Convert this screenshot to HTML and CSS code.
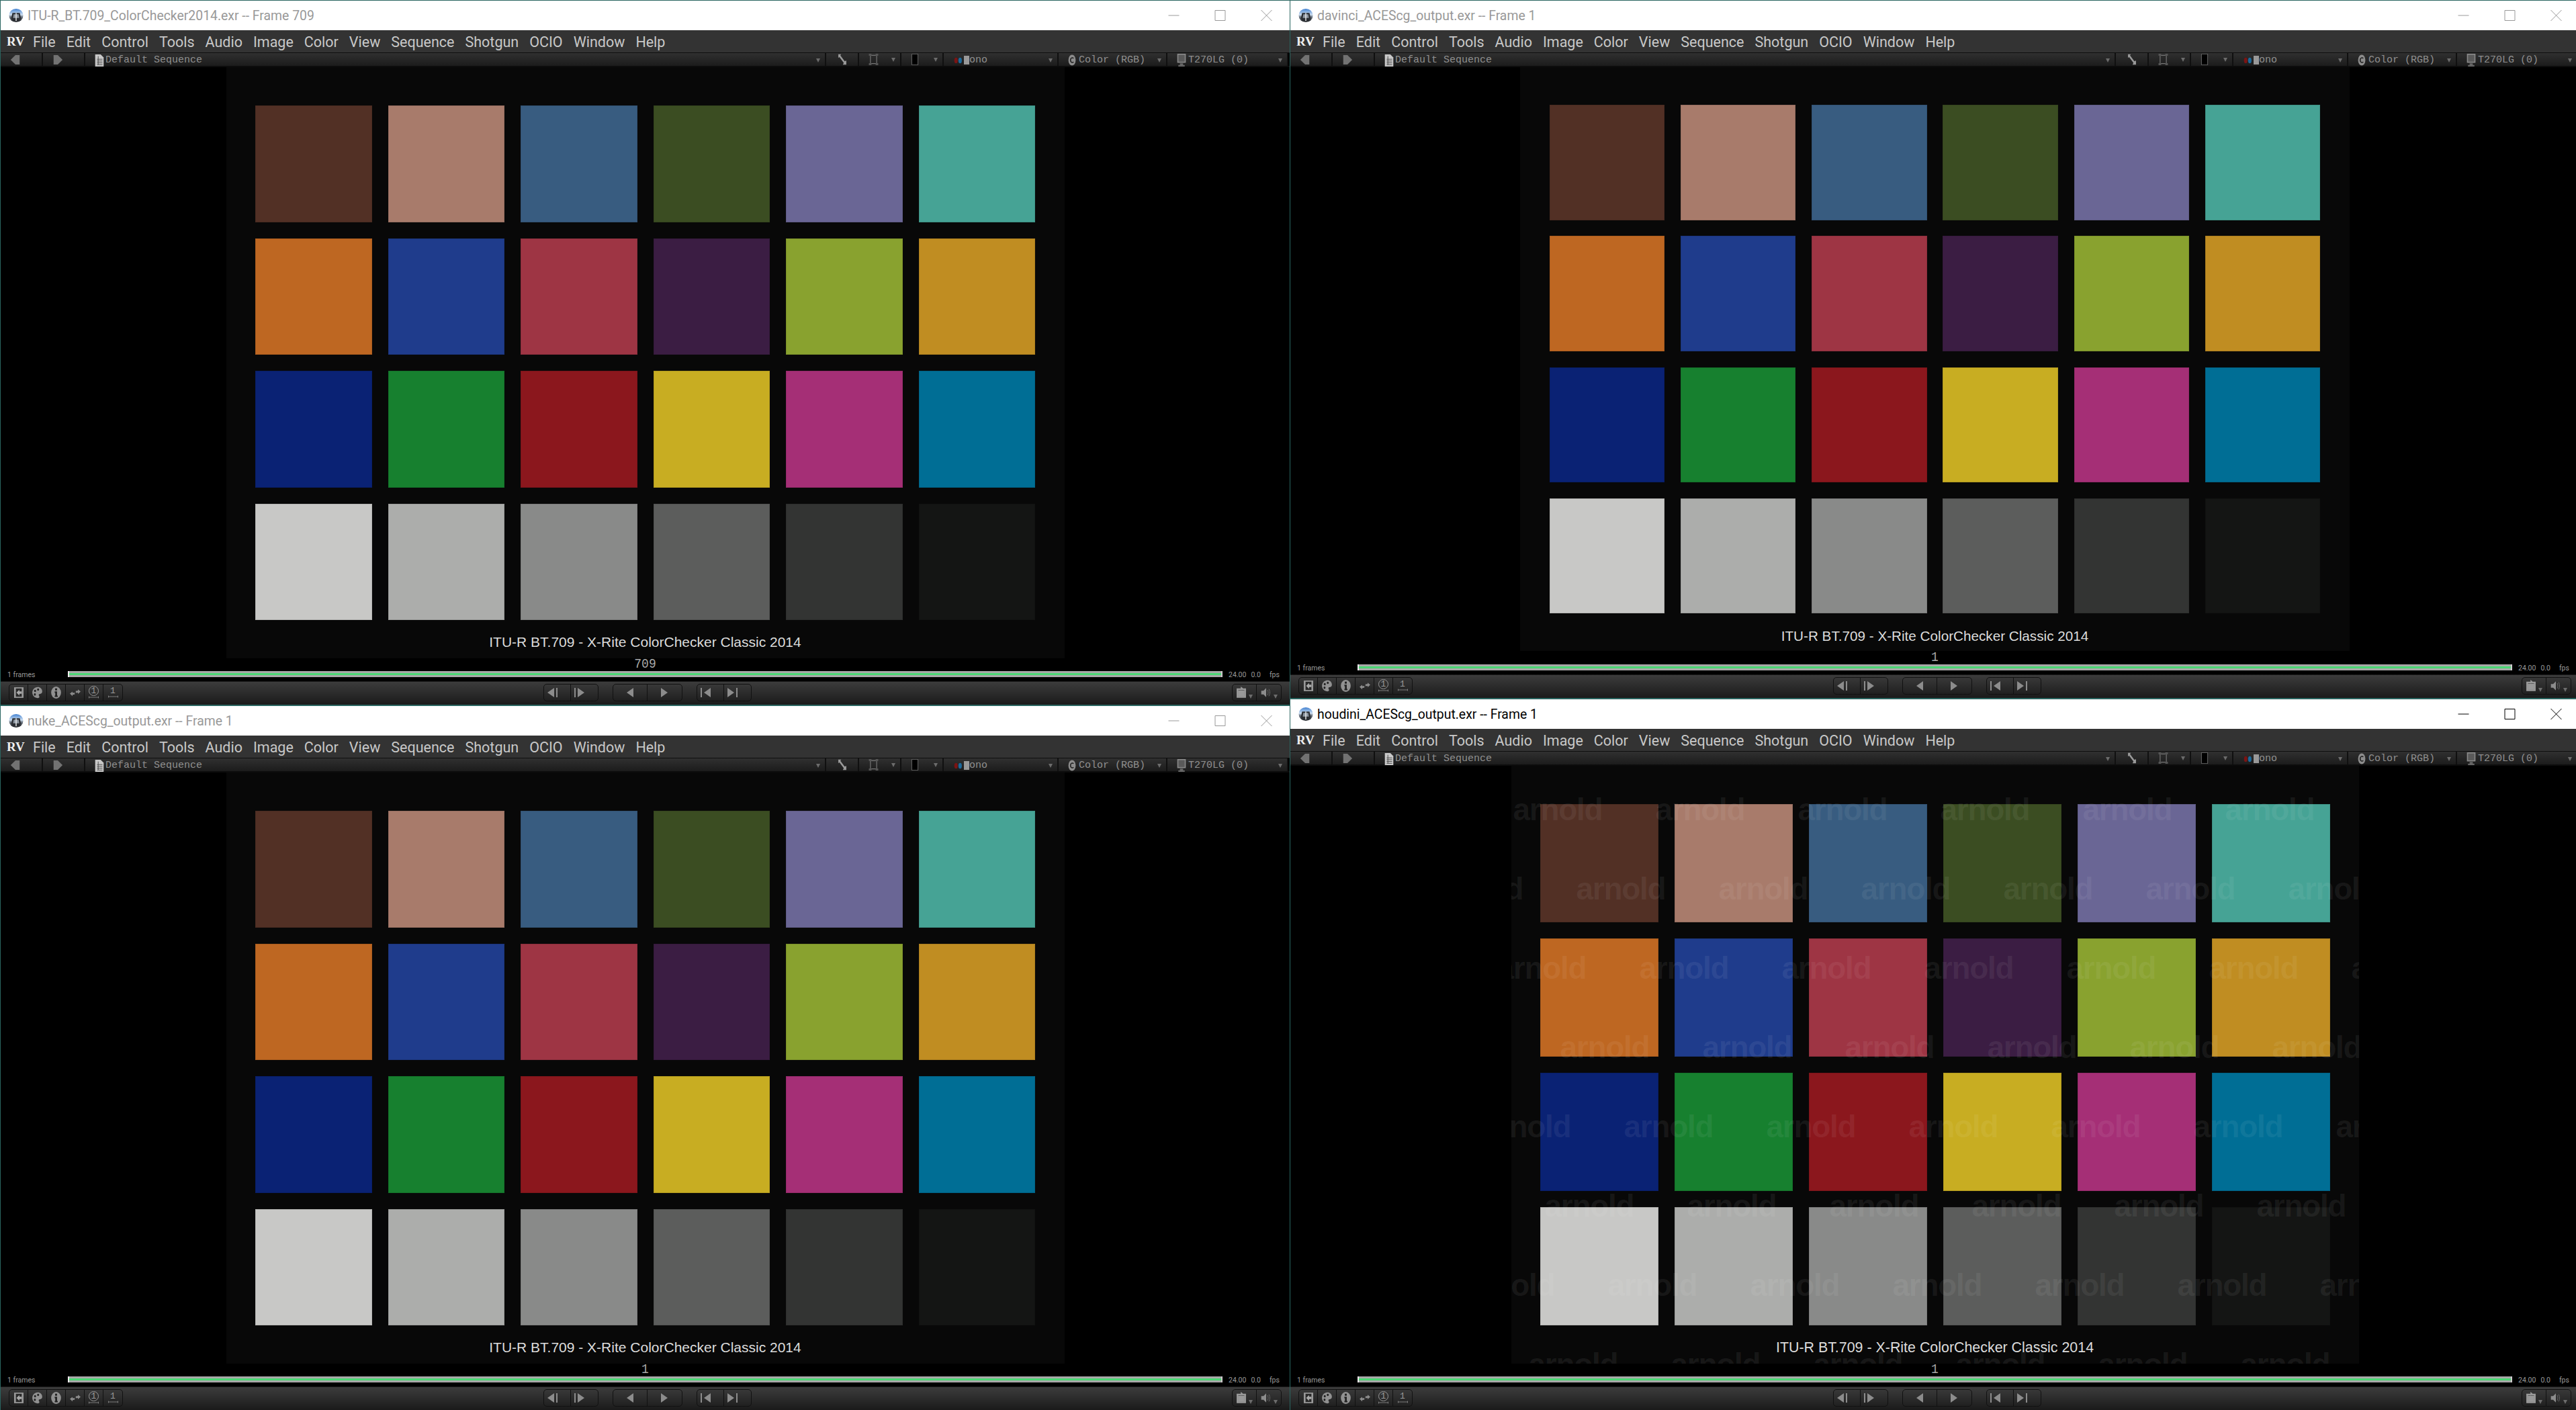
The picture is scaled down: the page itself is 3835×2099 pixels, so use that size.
FILE: index.html
```html
<!DOCTYPE html>
<html lang="en">
<head>
    <meta charset="UTF-8">
    <title>RV ColorChecker comparison</title>
    <link rel="stylesheet" href="styles.css">
</head>
<body>
<!-- shared icons -->
<svg class="defs" xmlns="http://www.w3.org/2000/svg">
    <defs>
        <linearGradient id="rv-sky" x1="0" y1="0" x2="0" y2="1">
            <stop offset="0" stop-color="#3f7fd0"/>
            <stop offset=".45" stop-color="#cfe0f2"/>
            <stop offset=".6" stop-color="#6b7480"/>
            <stop offset="1" stop-color="#1b1e22"/>
        </linearGradient>
    </defs>
    <symbol id="i-rv" viewBox="0 0 24 24">
        <ellipse cx="12" cy="12" rx="11.5" ry="11" fill="url(#rv-sky)"/>
        <path d="M6 8 L18 8 L20 17 L17 21 L7 21 L4 17 Z" fill="#2b2e33"/>
        <path d="M8 10 L16 10 L17 16 L7 16 Z" fill="#8f98a3"/>
        <path d="M11.2 8 H12.8 V21 H11.2 Z" fill="#e6e8ea"/>
    </symbol>
    <symbol id="i-back" viewBox="0 0 18 18"><path d="M1 9 L9 1 H16 V17 H9 Z" fill="#727272"/></symbol>
    <symbol id="i-fwd" viewBox="0 0 18 18"><path d="M17 9 L9 1 H2 V17 H9 Z" fill="#727272"/></symbol>
    <symbol id="i-doc" viewBox="0 0 14 20">
        <path d="M0 0 H9 L14 5 V20 H0 Z" fill="#c8c8c8"/>
        <path d="M3 8 H12 M3 11 H12 M3 14 H12 M3 17 H12 M5 3 V17" stroke="#444" stroke-width="1"/>
    </symbol>
    <symbol id="i-diag" viewBox="0 0 16 20">
        <path d="M1 1 L6 1 L4.5 3 L12 13 L15 12 L15 19 L9 19 L10.5 16 L3 6 L1 7 Z" fill="#9a9a9a"/>
    </symbol>
    <symbol id="i-frame" viewBox="0 0 18 22">
        <path d="M3 3 H15 V19 H3 Z" fill="none" stroke="#777" stroke-width="1.5"/>
        <path d="M0 0 H5 V4 H0 Z M13 0 H18 V4 H13 Z M0 18 H5 V22 H0 Z M13 18 H18 V22 H13 Z" fill="#555"/>
    </symbol>
    <symbol id="i-box" viewBox="0 0 14 24"><path d="M.5 .5 H13.5 V23.5 H.5 Z" fill="#000" stroke="#888"/></symbol>
    <symbol id="i-dots" viewBox="0 0 17 14">
        <ellipse cx="4" cy="7" rx="3.6" ry="6" fill="#7a1414"/>
        <ellipse cx="12.5" cy="7" rx="3.6" ry="6" fill="#1c6a9c"/>
    </symbol>
    <symbol id="i-color" viewBox="0 0 14 22">
        <ellipse cx="7" cy="11" rx="7" ry="10.5" fill="#8c8c8c"/>
        <path d="M10 7.5 C8 5.5 4 6 4 11 C4 16 8 16.5 10 14.5" fill="none" stroke="#1c1c1c" stroke-width="2"/>
    </symbol>
    <symbol id="i-monitor" viewBox="0 0 16 24">
        <path d="M0 0 H16 V17 H0 Z" fill="#8a8a8a"/>
        <path d="M2 2 H14 V15 H2 Z" fill="#5a5a5a"/>
        <path d="M5 18 H11 V21 H14 V24 H2 V21 H5 Z" fill="#666"/>
    </symbol>
    <symbol id="i-exit" viewBox="0 0 16 20">
        <path d="M0 1 H16 V19 H0 Z" fill="#999"/>
        <path d="M3 3 H13 V17 H3 Z" fill="#2a2a2a"/>
        <path d="M4 10 L9 5 V8 H13 V12 H9 V15 Z" fill="#aaa"/>
    </symbol>
    <symbol id="i-palette" viewBox="0 0 18 22">
        <path d="M10 1 C4 1 0 6 0 11 C0 17 5 21 10 21 C13 21 13.5 18.5 12 16.5 C11 15 12 13.5 14 13.5 C17 13.5 18 11 18 9 C18 4 14 1 10 1 Z" fill="#919191"/>
        <ellipse cx="5" cy="8" rx="1.8" ry="2.2" fill="#222"/>
        <ellipse cx="10.5" cy="5.5" rx="1.8" ry="2.2" fill="#222"/>
        <ellipse cx="4.6" cy="14.5" rx="1.8" ry="2.2" fill="#222"/>
    </symbol>
    <symbol id="i-info" viewBox="0 0 18 22">
        <ellipse cx="9" cy="11" rx="9" ry="11" fill="#919191"/>
        <path d="M7.2 3.5 H10.8 V7 H7.2 Z M6.5 9 H10.8 V16.5 H12 V19 H6.5 V16.5 H7.5 V11.5 H6.5 Z" fill="#222"/>
    </symbol>
    <symbol id="i-swap" viewBox="0 0 20 14">
        <path d="M0 9 L5 5 V7.5 L9 7 V10.5 L5 11 V13.5 Z M20 5 L15 1 V3.5 L11 4 V7.5 L15 7 V9.5 Z" fill="#8c8c8c"/>
    </symbol>
    <symbol id="i-speaker" viewBox="0 0 24 24">
        <path d="M1 8 H6 L12 2 V22 L6 16 H1 Z" fill="#8c8c8c"/>
        <path d="M15 6 C17 10 17 14 15 18 M18 4 C21 9 21 15 18 20" fill="none" stroke="#666" stroke-width="1.5"/>
    </symbol>
    <symbol id="i-loop" viewBox="0 0 18 22">
        <path d="M2 5 H16 V19 H2 Z" fill="none" stroke="#999" stroke-width="3"/>
        <path d="M3 7 H15 V18 H3 Z" fill="#999"/>
        <path d="M8 0 L12 3 L8 7 Z" fill="#999"/>
    </symbol>
    <symbol id="i-ruler" viewBox="0 0 20 4"><path d="M.5 0 V4 M19.5 0 V4 M0 2 H20" stroke="#999" stroke-width="1"/></symbol>
    <symbol id="i-min" viewBox="0 0 16 16"><path d="M0 8 H16" stroke="currentColor" stroke-width="1"/></symbol>
    <symbol id="i-max" viewBox="0 0 16 16"><path d="M.5 .5 H15.5 V15.5 H.5 Z" fill="none" stroke="currentColor"/></symbol>
    <symbol id="i-close" viewBox="0 0 16 16"><path d="M0 0 L16 16 M16 0 L0 16" stroke="currentColor" stroke-width="1"/></symbol>
</svg>

<div class="desktop">
    <div class="col">

        <!-- top left -->
        <section class="win win-tall">
            <header class="titlebar">
                <svg class="logo"><use href="#i-rv"/></svg>
                <span class="title">ITU-R_BT.709_ColorChecker2014.exr -- Frame 709</span>
                <div class="winbtns">
                    <svg><use href="#i-min"/></svg><svg><use href="#i-max"/></svg><svg><use href="#i-close"/></svg>
                </div>
            </header>
            <nav class="menubar">
                <b class="rv">RV</b><span>File</span><span>Edit</span><span>Control</span><span>Tools</span><span>Audio</span><span>Image</span><span>Color</span><span>View</span><span>Sequence</span><span>Shotgun</span><span>OCIO</span><span>Window</span><span>Help</span>
            </nav>
            <div class="toolbar">
                <div class="cell c-nav"><svg class="ic-nav"><use href="#i-back"/></svg></div>
                <div class="cell c-nav"><svg class="ic-nav"><use href="#i-fwd"/></svg></div>
                <div class="cell c-seq"><svg class="ic-doc"><use href="#i-doc"/></svg>Default Sequence<i class="arrow"></i></div>
                <div class="cell c-diag"><svg class="ic-diag"><use href="#i-diag"/></svg></div>
                <div class="cell c-small"><svg class="ic-frame"><use href="#i-frame"/></svg><i class="arrow"></i></div>
                <div class="cell c-small"><svg class="ic-box"><use href="#i-box"/></svg><i class="arrow"></i></div>
                <div class="cell c-mono"><svg class="ic-dots"><use href="#i-dots"/></svg><i class="mono-block"></i>ono<i class="arrow"></i></div>
                <div class="cell c-color"><svg class="ic-color"><use href="#i-color"/></svg>Color (RGB)<i class="arrow"></i></div>
                <div class="cell c-disp"><svg class="ic-mon"><use href="#i-monitor"/></svg>T270LG (0)<i class="arrow"></i></div>
            </div>
            <div class="view">
                <div class="stage">
                    <div class="chart chart-a">
                        <div class="swatches">
                            <div class="s s1"></div><div class="s s2"></div><div class="s s3"></div><div class="s s4"></div><div class="s s5"></div><div class="s s6"></div>
                            <div class="s s7"></div><div class="s s8"></div><div class="s s9"></div><div class="s s10"></div><div class="s s11"></div><div class="s s12"></div>
                            <div class="s s13"></div><div class="s s14"></div><div class="s s15"></div><div class="s s16"></div><div class="s s17"></div><div class="s s18"></div>
                            <div class="s s19"></div><div class="s s20"></div><div class="s s21"></div><div class="s s22"></div><div class="s s23"></div><div class="s s24"></div>
                        </div>
                        <p class="caption">ITU-R BT.709 - X-Rite ColorChecker Classic 2014</p>
                    </div>
                </div>
                <div class="frameno">709</div>
            </div>
            <div class="timeline">
                <span class="tl-label">1 frames</span>
                <div class="tl-bar"><div class="tl-fill"></div></div>
                <div class="tl-info"><span>24.00</span><span class="tl-fps">0.0</span><span class="tl-unit">fps</span></div>
            </div>
            <footer class="controls">
                <div class="group g-left">
                    <div class="btn"><svg class="ic-exit"><use href="#i-exit"/></svg></div>
                    <div class="btn"><svg class="ic-pal"><use href="#i-palette"/></svg></div>
                    <div class="btn"><svg class="ic-pal"><use href="#i-info"/></svg></div>
                    <div class="btn"><svg class="ic-swap"><use href="#i-swap"/></svg></div>
                    <div class="btn btn-num"><span class="ring">1</span><svg class="ic-rule"><use href="#i-ruler"/></svg></div>
                    <div class="btn btn-num"><span>1</span><svg class="ic-rule"><use href="#i-ruler"/></svg></div>
                </div>
                <div class="transport">
                    <div class="group">
                        <div class="btn b-step"><i class="tri tri-l"></i><i class="tick"></i></div>
                        <div class="btn b-step"><i class="tick"></i><i class="tri tri-r"></i></div>
                    </div>
                    <div class="group">
                        <div class="btn b-play"><i class="tri tri-l"></i></div>
                        <div class="btn b-play"><i class="tri tri-r"></i></div>
                    </div>
                    <div class="group">
                        <div class="btn b-step"><i class="tick"></i><i class="tri tri-l"></i></div>
                        <div class="btn b-step"><i class="tri tri-r"></i><i class="tick"></i></div>
                    </div>
                </div>
                <div class="group g-right">
                    <div class="btn b-opt"><svg class="ic-opt"><use href="#i-loop"/></svg><i class="arrow"></i></div>
                    <div class="btn b-opt"><svg class="ic-opt"><use href="#i-speaker"/></svg><i class="arrow"></i></div>
                </div>
            </footer>
        </section>

        <!-- bottom left -->
        <section class="win win-low">
            <header class="titlebar">
                <svg class="logo"><use href="#i-rv"/></svg>
                <span class="title">nuke_ACEScg_output.exr -- Frame 1</span>
                <div class="winbtns">
                    <svg><use href="#i-min"/></svg><svg><use href="#i-max"/></svg><svg><use href="#i-close"/></svg>
                </div>
            </header>
            <nav class="menubar">
                <b class="rv">RV</b><span>File</span><span>Edit</span><span>Control</span><span>Tools</span><span>Audio</span><span>Image</span><span>Color</span><span>View</span><span>Sequence</span><span>Shotgun</span><span>OCIO</span><span>Window</span><span>Help</span>
            </nav>
            <div class="toolbar">
                <div class="cell c-nav"><svg class="ic-nav"><use href="#i-back"/></svg></div>
                <div class="cell c-nav"><svg class="ic-nav"><use href="#i-fwd"/></svg></div>
                <div class="cell c-seq"><svg class="ic-doc"><use href="#i-doc"/></svg>Default Sequence<i class="arrow"></i></div>
                <div class="cell c-diag"><svg class="ic-diag"><use href="#i-diag"/></svg></div>
                <div class="cell c-small"><svg class="ic-frame"><use href="#i-frame"/></svg><i class="arrow"></i></div>
                <div class="cell c-small"><svg class="ic-box"><use href="#i-box"/></svg><i class="arrow"></i></div>
                <div class="cell c-mono"><svg class="ic-dots"><use href="#i-dots"/></svg><i class="mono-block"></i>ono<i class="arrow"></i></div>
                <div class="cell c-color"><svg class="ic-color"><use href="#i-color"/></svg>Color (RGB)<i class="arrow"></i></div>
                <div class="cell c-disp"><svg class="ic-mon"><use href="#i-monitor"/></svg>T270LG (0)<i class="arrow"></i></div>
            </div>
            <div class="view">
                <div class="stage">
                    <div class="chart chart-a">
                        <div class="swatches">
                            <div class="s s1"></div><div class="s s2"></div><div class="s s3"></div><div class="s s4"></div><div class="s s5"></div><div class="s s6"></div>
                            <div class="s s7"></div><div class="s s8"></div><div class="s s9"></div><div class="s s10"></div><div class="s s11"></div><div class="s s12"></div>
                            <div class="s s13"></div><div class="s s14"></div><div class="s s15"></div><div class="s s16"></div><div class="s s17"></div><div class="s s18"></div>
                            <div class="s s19"></div><div class="s s20"></div><div class="s s21"></div><div class="s s22"></div><div class="s s23"></div><div class="s s24"></div>
                        </div>
                        <p class="caption">ITU-R BT.709 - X-Rite ColorChecker Classic 2014</p>
                    </div>
                </div>
                <div class="frameno">1</div>
            </div>
            <div class="timeline">
                <span class="tl-label">1 frames</span>
                <div class="tl-bar"><div class="tl-fill"></div></div>
                <div class="tl-info"><span>24.00</span><span class="tl-fps">0.0</span><span class="tl-unit">fps</span></div>
            </div>
            <footer class="controls">
                <div class="group g-left">
                    <div class="btn"><svg class="ic-exit"><use href="#i-exit"/></svg></div>
                    <div class="btn"><svg class="ic-pal"><use href="#i-palette"/></svg></div>
                    <div class="btn"><svg class="ic-pal"><use href="#i-info"/></svg></div>
                    <div class="btn"><svg class="ic-swap"><use href="#i-swap"/></svg></div>
                    <div class="btn btn-num"><span class="ring">1</span><svg class="ic-rule"><use href="#i-ruler"/></svg></div>
                    <div class="btn btn-num"><span>1</span><svg class="ic-rule"><use href="#i-ruler"/></svg></div>
                </div>
                <div class="transport">
                    <div class="group">
                        <div class="btn b-step"><i class="tri tri-l"></i><i class="tick"></i></div>
                        <div class="btn b-step"><i class="tick"></i><i class="tri tri-r"></i></div>
                    </div>
                    <div class="group">
                        <div class="btn b-play"><i class="tri tri-l"></i></div>
                        <div class="btn b-play"><i class="tri tri-r"></i></div>
                    </div>
                    <div class="group">
                        <div class="btn b-step"><i class="tick"></i><i class="tri tri-l"></i></div>
                        <div class="btn b-step"><i class="tri tri-r"></i><i class="tick"></i></div>
                    </div>
                </div>
                <div class="group g-right">
                    <div class="btn b-opt"><svg class="ic-opt"><use href="#i-loop"/></svg><i class="arrow"></i></div>
                    <div class="btn b-opt"><svg class="ic-opt"><use href="#i-speaker"/></svg><i class="arrow"></i></div>
                </div>
            </footer>
        </section>
    </div>

    <div class="col">

        <!-- top right -->
        <section class="win win-short">
            <header class="titlebar">
                <svg class="logo"><use href="#i-rv"/></svg>
                <span class="title">davinci_ACEScg_output.exr -- Frame 1</span>
                <div class="winbtns">
                    <svg><use href="#i-min"/></svg><svg><use href="#i-max"/></svg><svg><use href="#i-close"/></svg>
                </div>
            </header>
            <nav class="menubar">
                <b class="rv">RV</b><span>File</span><span>Edit</span><span>Control</span><span>Tools</span><span>Audio</span><span>Image</span><span>Color</span><span>View</span><span>Sequence</span><span>Shotgun</span><span>OCIO</span><span>Window</span><span>Help</span>
            </nav>
            <div class="toolbar">
                <div class="cell c-nav"><svg class="ic-nav"><use href="#i-back"/></svg></div>
                <div class="cell c-nav"><svg class="ic-nav"><use href="#i-fwd"/></svg></div>
                <div class="cell c-seq"><svg class="ic-doc"><use href="#i-doc"/></svg>Default Sequence<i class="arrow"></i></div>
                <div class="cell c-diag"><svg class="ic-diag"><use href="#i-diag"/></svg></div>
                <div class="cell c-small"><svg class="ic-frame"><use href="#i-frame"/></svg><i class="arrow"></i></div>
                <div class="cell c-small"><svg class="ic-box"><use href="#i-box"/></svg><i class="arrow"></i></div>
                <div class="cell c-mono"><svg class="ic-dots"><use href="#i-dots"/></svg><i class="mono-block"></i>ono<i class="arrow"></i></div>
                <div class="cell c-color"><svg class="ic-color"><use href="#i-color"/></svg>Color (RGB)<i class="arrow"></i></div>
                <div class="cell c-disp"><svg class="ic-mon"><use href="#i-monitor"/></svg>T270LG (0)<i class="arrow"></i></div>
            </div>
            <div class="view">
                <div class="stage">
                    <div class="chart chart-b">
                        <div class="swatches">
                            <div class="s s1"></div><div class="s s2"></div><div class="s s3"></div><div class="s s4"></div><div class="s s5"></div><div class="s s6"></div>
                            <div class="s s7"></div><div class="s s8"></div><div class="s s9"></div><div class="s s10"></div><div class="s s11"></div><div class="s s12"></div>
                            <div class="s s13"></div><div class="s s14"></div><div class="s s15"></div><div class="s s16"></div><div class="s s17"></div><div class="s s18"></div>
                            <div class="s s19"></div><div class="s s20"></div><div class="s s21"></div><div class="s s22"></div><div class="s s23"></div><div class="s s24"></div>
                        </div>
                        <p class="caption">ITU-R BT.709 - X-Rite ColorChecker Classic 2014</p>
                    </div>
                </div>
                <div class="frameno">1</div>
            </div>
            <div class="timeline">
                <span class="tl-label">1 frames</span>
                <div class="tl-bar"><div class="tl-fill"></div></div>
                <div class="tl-info"><span>24.00</span><span class="tl-fps">0.0</span><span class="tl-unit">fps</span></div>
            </div>
            <footer class="controls">
                <div class="group g-left">
                    <div class="btn"><svg class="ic-exit"><use href="#i-exit"/></svg></div>
                    <div class="btn"><svg class="ic-pal"><use href="#i-palette"/></svg></div>
                    <div class="btn"><svg class="ic-pal"><use href="#i-info"/></svg></div>
                    <div class="btn"><svg class="ic-swap"><use href="#i-swap"/></svg></div>
                    <div class="btn btn-num"><span class="ring">1</span><svg class="ic-rule"><use href="#i-ruler"/></svg></div>
                    <div class="btn btn-num"><span>1</span><svg class="ic-rule"><use href="#i-ruler"/></svg></div>
                </div>
                <div class="transport">
                    <div class="group">
                        <div class="btn b-step"><i class="tri tri-l"></i><i class="tick"></i></div>
                        <div class="btn b-step"><i class="tick"></i><i class="tri tri-r"></i></div>
                    </div>
                    <div class="group">
                        <div class="btn b-play"><i class="tri tri-l"></i></div>
                        <div class="btn b-play"><i class="tri tri-r"></i></div>
                    </div>
                    <div class="group">
                        <div class="btn b-step"><i class="tick"></i><i class="tri tri-l"></i></div>
                        <div class="btn b-step"><i class="tri tri-r"></i><i class="tick"></i></div>
                    </div>
                </div>
                <div class="group g-right">
                    <div class="btn b-opt"><svg class="ic-opt"><use href="#i-loop"/></svg><i class="arrow"></i></div>
                    <div class="btn b-opt"><svg class="ic-opt"><use href="#i-speaker"/></svg><i class="arrow"></i></div>
                </div>
            </footer>
        </section>

        <!-- bottom right, the focused window -->
        <section class="win win-big active">
            <header class="titlebar">
                <svg class="logo"><use href="#i-rv"/></svg>
                <span class="title">houdini_ACEScg_output.exr -- Frame 1</span>
                <div class="winbtns">
                    <svg><use href="#i-min"/></svg><svg><use href="#i-max"/></svg><svg><use href="#i-close"/></svg>
                </div>
            </header>
            <nav class="menubar">
                <b class="rv">RV</b><span>File</span><span>Edit</span><span>Control</span><span>Tools</span><span>Audio</span><span>Image</span><span>Color</span><span>View</span><span>Sequence</span><span>Shotgun</span><span>OCIO</span><span>Window</span><span>Help</span>
            </nav>
            <div class="toolbar">
                <div class="cell c-nav"><svg class="ic-nav"><use href="#i-back"/></svg></div>
                <div class="cell c-nav"><svg class="ic-nav"><use href="#i-fwd"/></svg></div>
                <div class="cell c-seq"><svg class="ic-doc"><use href="#i-doc"/></svg>Default Sequence<i class="arrow"></i></div>
                <div class="cell c-diag"><svg class="ic-diag"><use href="#i-diag"/></svg></div>
                <div class="cell c-small"><svg class="ic-frame"><use href="#i-frame"/></svg><i class="arrow"></i></div>
                <div class="cell c-small"><svg class="ic-box"><use href="#i-box"/></svg><i class="arrow"></i></div>
                <div class="cell c-mono"><svg class="ic-dots"><use href="#i-dots"/></svg><i class="mono-block"></i>ono<i class="arrow"></i></div>
                <div class="cell c-color"><svg class="ic-color"><use href="#i-color"/></svg>Color (RGB)<i class="arrow"></i></div>
                <div class="cell c-disp"><svg class="ic-mon"><use href="#i-monitor"/></svg>T270LG (0)<i class="arrow"></i></div>
            </div>
            <div class="view">
                <div class="stage">
                    <div class="chart chart-c">
                        <div class="swatches">
                            <div class="s s1"></div><div class="s s2"></div><div class="s s3"></div><div class="s s4"></div><div class="s s5"></div><div class="s s6"></div>
                            <div class="s s7"></div><div class="s s8"></div><div class="s s9"></div><div class="s s10"></div><div class="s s11"></div><div class="s s12"></div>
                            <div class="s s13"></div><div class="s s14"></div><div class="s s15"></div><div class="s s16"></div><div class="s s17"></div><div class="s s18"></div>
                            <div class="s s19"></div><div class="s s20"></div><div class="s s21"></div><div class="s s22"></div><div class="s s23"></div><div class="s s24"></div>
                        </div>
                        <p class="caption">ITU-R BT.709 - X-Rite ColorChecker Classic 2014</p>
                        <!-- render watermark -->
                        <div class="watermark">
                            <div class="wm-row"><span>arnold</span><span>arnold</span><span>arnold</span><span>arnold</span><span>arnold</span><span>arnold</span><span>arnold</span></div>
                            <div class="wm-row"><span>arnold</span><span>arnold</span><span>arnold</span><span>arnold</span><span>arnold</span><span>arnold</span><span>arnold</span></div>
                            <div class="wm-row"><span>arnold</span><span>arnold</span><span>arnold</span><span>arnold</span><span>arnold</span><span>arnold</span><span>arnold</span></div>
                            <div class="wm-row"><span>arnold</span><span>arnold</span><span>arnold</span><span>arnold</span><span>arnold</span><span>arnold</span><span>arnold</span></div>
                            <div class="wm-row"><span>arnold</span><span>arnold</span><span>arnold</span><span>arnold</span><span>arnold</span><span>arnold</span><span>arnold</span></div>
                            <div class="wm-row"><span>arnold</span><span>arnold</span><span>arnold</span><span>arnold</span><span>arnold</span><span>arnold</span><span>arnold</span></div>
                            <div class="wm-row"><span>arnold</span><span>arnold</span><span>arnold</span><span>arnold</span><span>arnold</span><span>arnold</span><span>arnold</span></div>
                            <div class="wm-row"><span>arnold</span><span>arnold</span><span>arnold</span><span>arnold</span><span>arnold</span><span>arnold</span><span>arnold</span></div>
                        </div>
                    </div>
                </div>
                <div class="frameno">1</div>
            </div>
            <div class="timeline">
                <span class="tl-label">1 frames</span>
                <div class="tl-bar"><div class="tl-fill"></div></div>
                <div class="tl-info"><span>24.00</span><span class="tl-fps">0.0</span><span class="tl-unit">fps</span></div>
            </div>
            <footer class="controls">
                <div class="group g-left">
                    <div class="btn"><svg class="ic-exit"><use href="#i-exit"/></svg></div>
                    <div class="btn"><svg class="ic-pal"><use href="#i-palette"/></svg></div>
                    <div class="btn"><svg class="ic-pal"><use href="#i-info"/></svg></div>
                    <div class="btn"><svg class="ic-swap"><use href="#i-swap"/></svg></div>
                    <div class="btn btn-num"><span class="ring">1</span><svg class="ic-rule"><use href="#i-ruler"/></svg></div>
                    <div class="btn btn-num"><span>1</span><svg class="ic-rule"><use href="#i-ruler"/></svg></div>
                </div>
                <div class="transport">
                    <div class="group">
                        <div class="btn b-step"><i class="tri tri-l"></i><i class="tick"></i></div>
                        <div class="btn b-step"><i class="tick"></i><i class="tri tri-r"></i></div>
                    </div>
                    <div class="group">
                        <div class="btn b-play"><i class="tri tri-l"></i></div>
                        <div class="btn b-play"><i class="tri tri-r"></i></div>
                    </div>
                    <div class="group">
                        <div class="btn b-step"><i class="tick"></i><i class="tri tri-l"></i></div>
                        <div class="btn b-step"><i class="tri tri-r"></i><i class="tick"></i></div>
                    </div>
                </div>
                <div class="group g-right">
                    <div class="btn b-opt"><svg class="ic-opt"><use href="#i-loop"/></svg><i class="arrow"></i></div>
                    <div class="btn b-opt"><svg class="ic-opt"><use href="#i-speaker"/></svg><i class="arrow"></i></div>
                </div>
            </footer>
        </section>
    </div>
</div>
</body>
</html>
```

FILE: styles.css
```css
* {
    box-sizing: border-box;
}
html, body {
    margin: 0;
    background: #000;
}
.defs {
    display: block;
    width: 0;
    height: 0;
}
.desktop {
    display: grid;
    grid-template-columns: 1920px 1920px;
    width: 3835px;
    height: 2099px;
    overflow: hidden;
}
.col {
    display: flex;
    flex-direction: column;
}

/* windows */
.win {
    display: flex;
    flex-direction: column;
    background: #000;
    border-left: 1px solid #2a6560;
    border-top: 1px solid #2a6560;
}
.win-tall  { height: 1049px; }
.win-low   { height: 1050px; border-top-width: 2px; }
.win-short { height: 1039px; }
.win-big   { height: 1060px; border-top-width: 2px; }

.titlebar {
    display: flex;
    align-items: center;
    height: 44px;
    flex: none;
    background: #fff;
    color: #999;
    padding-left: 11px;
    font: 19.4px Roboto, "Liberation Sans", sans-serif;
}
.active .titlebar {
    color: #000;
}
.logo {
    width: 24px;
    height: 22px;
    margin-right: 5px;
}
.winbtns {
    display: flex;
    margin-left: auto;
}
.winbtns svg {
    width: 69px;
    height: 16px;
    color: #999;
}
.active .winbtns svg {
    color: #000;
}

.menubar {
    display: flex;
    align-items: center;
    gap: 16px;
    height: 33px;
    flex: none;
    padding: 1px 0 0 9px;
    background: #333;
    color: #c8c8c8;
    font: 21.5px Roboto, "Liberation Sans", sans-serif;
}
.rv {
    width: 23px;
    color: #eee;
    font: bold 19px "Liberation Serif", serif;
}

/* toolbar above the image */
.toolbar {
    display: flex;
    height: 22px;
    flex: none;
    border-top: 1px solid #0e0e0e;
    border-bottom: 2px solid #0c0c0c;
    color: #8f8f8f;
    font: 15px "Liberation Mono", monospace;
}
.cell {
    display: flex;
    align-items: center;
    padding: 2px 7px 0 13px;
    background: linear-gradient(#303030, #1c1c1c);
    border-right: 2px solid #101010;
    white-space: nowrap;
}
.c-nav   { width: 63px; padding-top: 0; }
.c-seq   { width: 1103px; padding-left: 14px; }
.c-diag  { width: 49px; padding-left: 17px; padding-top: 0; }
.c-small { width: 63px; padding-top: 0; }
.c-mono  { width: 171px; }
.c-color { width: 162px; }
.c-disp  { width: 180px; }
.arrow {
    margin-left: auto;
    border-left: 3px solid transparent;
    border-right: 3px solid transparent;
    border-top: 6px solid #6c6c6c;
}
.ic-nav   { width: 18px; height: 16px; }
.ic-doc   { width: 14px; height: 18px; margin-right: 2px; }
.ic-diag  { width: 14px; height: 17px; }
.ic-frame { width: 17px; height: 17px; }
.ic-box   { width: 14px; height: 17px; }
.ic-dots  { width: 17px; height: 10px; }
.ic-color { width: 14px; height: 17px; margin-right: 3px; }
.ic-mon   { width: 16px; height: 19px; margin-right: 2px; }
.mono-block {
    width: 8px;
    height: 13px;
    background: #999;
}

/* image viewer */
.view {
    flex: 1;
    display: flex;
    flex-direction: column;
    min-height: 0;
}
.stage {
    flex: 1;
    display: flex;
    justify-content: center;
    align-items: flex-start;
    min-height: 0;
}
.chart {
    position: relative;
    flex: none;
    overflow: hidden;
    width: var(--w);
    height: var(--h);
    padding-top: var(--top);
    background: #080808;
}
.chart-a { --w: 1248px; --h: 880px; --top: 57px; --sw: 173.5px; --gap: 24px; --cap: 20px; --capsize: 21px; }
.chart-b { --w: 1235px; --h: 869px; --top: 56px; --sw: 171.5px; --gap: 23.8px; --cap: 21px; --capsize: 20.7px; }
.chart-c { --w: 1262px; --h: 890px; --top: 57px; --sw: 176px; --gap: 24px; --cap: 20px; --capsize: 21.4px; }

.swatches {
    display: grid;
    grid-template-columns: repeat(6, var(--sw));
    grid-auto-rows: var(--sw);
    gap: var(--gap);
    justify-content: center;
}
.s {
    box-shadow: inset 0 0 0 1px rgba(0, 0, 0, .1);
}
.s1  { background: #523025; }
.s2  { background: #a87b6b; }
.s3  { background: #385c80; }
.s4  { background: #3b4d22; }
.s5  { background: #6a6695; }
.s6  { background: #46a395; }
.s7  { background: #be6722; }
.s8  { background: #1f3c8c; }
.s9  { background: #9e3544; }
.s10 { background: #3b1d43; }
.s11 { background: #89a22f; }
.s12 { background: #c08d22; }
.s13 { background: #0a2274; }
.s14 { background: #17802f; }
.s15 { background: #8b171d; }
.s16 { background: #c8ad22; }
.s17 { background: #a52f76; }
.s18 { background: #006e95; }
.s19 { background: #c8c8c6; }
.s20 { background: #acadab; }
.s21 { background: #898a89; }
.s22 { background: #5c5d5c; }
.s23 { background: #333433; }
.s24 { background: #141514; }

.caption {
    margin: var(--cap) 0 0;
    text-align: center;
    color: #dcdcdc;
    font: var(--capsize)/26px "Liberation Sans", Arial, sans-serif;
}

/* arnold watermark lies over the chart */
.watermark {
    position: absolute;
    inset: 0;
    padding-top: 6px;
    color: rgba(255, 255, 255, .07);
    font: bold 46px/118px "Liberation Sans", Arial, sans-serif;
    letter-spacing: -1.3px;
}
.wm-row {
    display: flex;
    height: 118px;
}
.wm-row span {
    flex: none;
    width: 212px;
}
.wm-row:nth-child(1) { margin-left: 3px; }
.wm-row:nth-child(2) { margin-left: -115px; }
.wm-row:nth-child(3) { margin-left: -21px; }
.wm-row:nth-child(4) { margin-left: 73px; }
.wm-row:nth-child(5) { margin-left: -44px; }
.wm-row:nth-child(6) { margin-left: 50px; }
.wm-row:nth-child(7) { margin-left: -68px; }
.wm-row:nth-child(8) { margin-left: 26px; }

.frameno {
    height: 19px;
    flex: none;
    text-align: center;
    color: #a8a8a8;
    font: 18px/19px "Liberation Mono", monospace;
    transform: scaleY(1.1);
}

/* timeline */
.timeline {
    display: grid;
    grid-template-columns: 100px 1fr 100px;
    height: 15px;
    flex: none;
    color: #999;
    font: 10.5px/9px Roboto, "Liberation Sans", sans-serif;
}
.tl-label {
    padding: 1px 0 0 10px;
}
.tl-bar {
    display: flex;
    align-items: center;
    height: 9px;
    background: #a8a8a8;
    border-left: 2px solid #eee;
    border-right: 2px solid #ccc;
}
.tl-fill {
    flex: 1;
    height: 3px;
    background: #4cd774;
}
.tl-info {
    display: flex;
    padding: 1px 0 0 9px;
}
.tl-fps  { margin-left: 7px; }
.tl-unit { margin-left: 13px; }

/* transport bar */
.controls {
    display: grid;
    grid-template-columns: 1fr auto 1fr;
    align-items: center;
    height: 35px;
    flex: none;
    padding: 0 12px 3px 12px;
    background: linear-gradient(#3c3c3c, #1a1a1a);
    border-top: 1px solid #1a1a1a;
}
.transport {
    display: flex;
    gap: 21px;
    margin-left: 6px;
}
.group {
    display: flex;
    height: 26px;
    border: 1px solid #111;
    border-radius: 5px;
}
.g-left {
    justify-self: start;
}
.g-right {
    justify-self: end;
}
.btn {
    display: flex;
    align-items: center;
    justify-content: center;
    width: 28px;
    border-right: 1px solid #111;
}
.btn:last-child {
    border-right: none;
}
.btn-num {
    flex-direction: column;
    color: #999;
    font: 13px/13px "Liberation Mono", monospace;
}
.ring {
    width: 15px;
    height: 15px;
    border: 1px solid #999;
    border-radius: 50%;
    text-align: center;
}
.b-step { width: 40px; gap: 3px; justify-content: flex-start; padding-left: 5px; }
.b-play { width: 51px; }
.b-opt  { width: 36px; align-items: center; }
.b-opt .arrow {
    margin: 12px 0 0 3px;
}
.tri {
    border-top: 7px solid transparent;
    border-bottom: 7px solid transparent;
}
.tri-l { border-right: 10px solid #8c8c8c; }
.tri-r { border-left: 10px solid #8c8c8c; }
.tick {
    width: 2px;
    height: 14px;
    background: #8c8c8c;
}
.ic-exit { width: 14px; height: 18px; }
.ic-pal  { width: 15px; height: 18px; }
.ic-swap { width: 16px; height: 12px; }
.ic-rule { width: 15px; height: 4px; }
.ic-opt  { width: 16px; height: 18px; }
```
